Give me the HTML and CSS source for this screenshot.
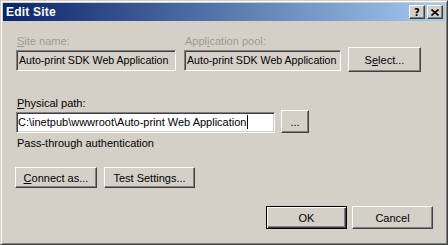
FILE: index.html
```html
<!DOCTYPE html>
<html lang="en">
<head>
    <meta charset="UTF-8">
    <title>Edit Site</title>
    <link rel="stylesheet" href="styles.css">
</head>
<body>
    <div class="window" role="dialog" aria-label="Edit Site">
        <div class="titlebar">
            <span class="title">Edit Site</span>
            <div class="title-buttons">
                <button class="tbtn help" aria-label="Help">?</button>
                <button class="tbtn" aria-label="Close">
                    <svg width="8" height="7" viewBox="0 0 8 7">
                        <path d="M0.5 0.5 L7.5 6.5 M7.5 0.5 L0.5 6.5" stroke="#000" stroke-width="1.6" fill="none"/>
                    </svg>
                </button>
            </div>
        </div>

        <div class="content">
            <div class="row top-row">
                <div class="field site-field">
                    <label class="disabled"><u>S</u>ite name:</label>
                    <div class="textbox readonly">Auto-print SDK Web Application</div>
                </div>
                <div class="field pool-field">
                    <label class="disabled">Appl<u>i</u>cation pool:</label>
                    <div class="textbox readonly">Auto-print SDK Web Application</div>
                </div>
                <button class="btn select-btn">S<u>e</u>lect...</button>
            </div>

            <div class="field path-group">
                <label><u>P</u>hysical path:</label>
                <div class="row">
                    <div class="textbox path-box">C:\inetpub\wwwroot\Auto-print Web Application<span class="caret"></span></div>
                    <button class="btn browse-btn">...</button>
                </div>
            </div>

            <div class="auth-text">Pass-through authentication</div>

            <div class="row small-buttons">
                <button class="btn connect-btn"><u>C</u>onnect as...</button>
                <button class="btn test-btn">Test Settin<u>g</u>s...</button>
            </div>

            <div class="row dialog-buttons">
                <button class="btn default-btn">OK</button>
                <button class="btn">Cancel</button>
            </div>
        </div>
    </div>
</body>
</html>
```

FILE: styles.css
```css
body {
    margin: 0;
    font-family: "Liberation Sans", Arial, sans-serif;
    font-size: 11px;
    background-color: #d4d0c8;
}
.window {
    width: 448px;
    height: 245px;
    box-sizing: border-box;
    background-color: #d4d0c8;
    border: 1px solid;
    border-color: #d4d0c8 #404040 #404040 #d4d0c8;
    box-shadow: inset 1px 1px #fff, inset -1px -1px #808080;
    padding: 2px;
    display: flex;
    flex-direction: column;
}
.titlebar {
    height: 18px;
    background: linear-gradient(to right, #0a246a, #a6caf0);
    display: flex;
    align-items: center;
    justify-content: space-between;
    padding: 0 2px 0 2px;
}
.title {
    color: #fff;
    font-weight: bold;
    font-size: 12px;
    padding-left: 1px;
    letter-spacing: 0.2px;
}
.title-buttons {
    display: flex;
    gap: 2px;
}
.tbtn {
    width: 16px;
    height: 14px;
    padding: 0;
    background-color: #d4d0c8;
    border: 1px solid;
    border-color: #fff #404040 #404040 #fff;
    box-shadow: inset -1px -1px #808080;
    display: flex;
    align-items: center;
    justify-content: center;
    font-family: "DejaVu Sans", sans-serif;
    font-weight: bold;
    font-size: 10px;
    color: #000;
}
.content {
    padding: 14px 12px 0 13px;
    display: flex;
    flex-direction: column;
    flex: 1;
}
.row {
    display: flex;
}
.field {
    display: flex;
    flex-direction: column;
}
label {
    display: block;
    line-height: 13px;
    margin: 0 0 2px 1px;
    color: #000;
}
label.disabled {
    color: #9d9a93;
}
.textbox {
    height: 21px;
    box-sizing: border-box;
    background-color: #fff;
    border: 1px solid;
    border-color: #808080 #fff #fff #808080;
    box-shadow: inset 1px 1px #404040, inset -1px -1px #d4d0c8;
    padding: 0 2px 0 2px;
    line-height: 19px;
    white-space: nowrap;
    overflow: hidden;
    color: #000;
    font-size: 10.6px;
}
.textbox.readonly {
    background-color: #d4d0c8;
}
.site-field {
    width: 160px;
    margin-right: 8px;
}
.pool-field {
    width: 157px;
    margin-right: 7px;
}
.btn {
    font-family: "Liberation Sans", Arial, sans-serif;
    font-size: 11px;
    color: #000;
    background-color: #d4d0c8;
    border: 1px solid;
    border-color: #fff #404040 #404040 #fff;
    box-shadow: inset -1px -1px #808080;
    padding: 0;
    height: 23px;
    width: 80px;
}
.select-btn {
    width: 73px;
    height: 25px;
    align-self: flex-end;
    margin-bottom: -1px;
}
.path-group {
    margin-top: 26px;
}
.path-group .row {
    align-items: flex-end;
}
.path-box {
    width: 259px;
    margin-right: 6px;
    padding-left: 1px;
    font-size: 11px;
}
.caret {
    display: inline-block;
    width: 1px;
    height: 14px;
    background-color: #000;
    vertical-align: -3px;
    margin-left: 1px;
}
.browse-btn {
    width: 28px;
    height: 23px;
    margin-top: -2px;
}
.auth-text {
    margin: 4px 0 0 1px;
    line-height: 13px;
}
.small-buttons {
    margin-top: 17px;
    gap: 7px;
}
.small-buttons .btn {
    height: 21px;
}
.connect-btn {
    width: 82px;
    margin-left: -1px;
}
.test-btn {
    width: 91px;
}
.dialog-buttons {
    margin-top: 18px;
    justify-content: flex-end;
    gap: 5px;
}
.dialog-buttons .btn {
    width: 81px;
}
.default-btn {
    border-color: #000;
    box-shadow: inset 1px 1px #fff, inset -1px -1px #404040, inset -2px -2px #808080;
}
```
